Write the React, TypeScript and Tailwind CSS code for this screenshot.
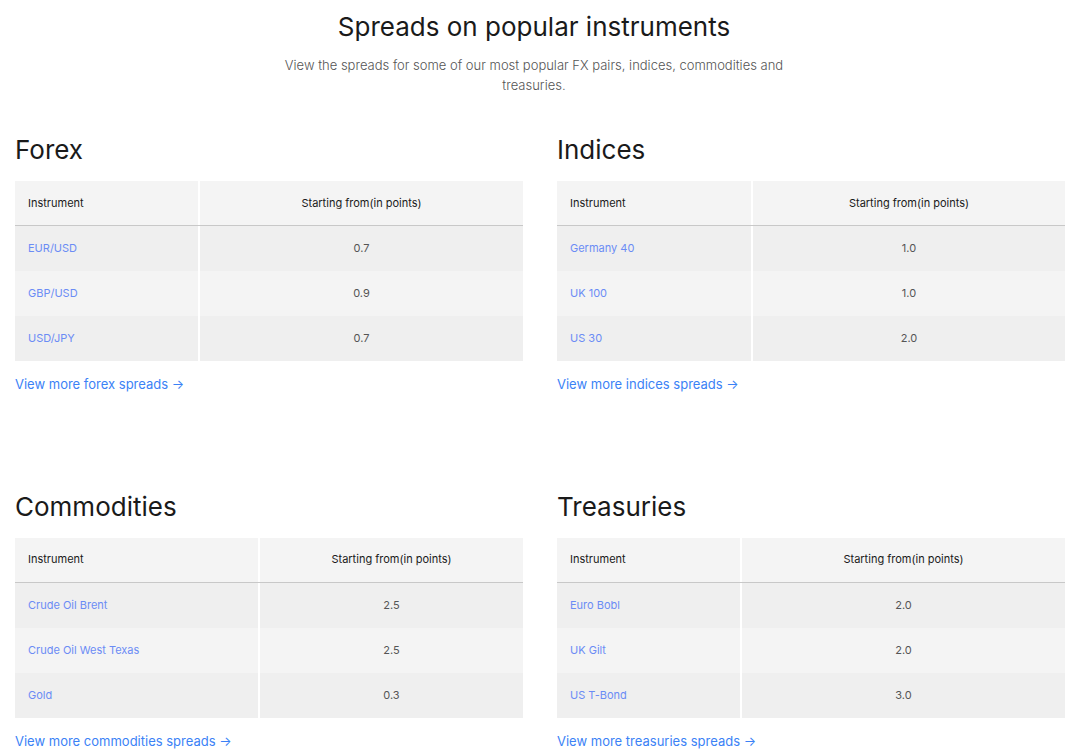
const sections = [
  { title: "Forex", w: "w-[185px]", link: "View more forex spreads", rows: [["EUR/USD", "0.7"], ["GBP/USD", "0.9"], ["USD/JPY", "0.7"]] },
  { title: "Indices", w: "w-[196px]", link: "View more indices spreads", rows: [["Germany 40", "1.0"], ["UK 100", "1.0"], ["US 30", "2.0"]] },
  { title: "Commodities", w: "w-[245px]", link: "View more commodities spreads", rows: [["Crude Oil Brent", "2.5"], ["Crude Oil West Texas", "2.5"], ["Gold", "0.3"]] },
  { title: "Treasuries", w: "w-[185px]", link: "View more treasuries spreads", rows: [["Euro Bobl", "2.0"], ["UK Gilt", "2.0"], ["US T-Bond", "3.0"]] },
];

function Section({ s }: { s: (typeof sections)[number] }) {
  return (
    <div>
      <h2 className="text-[26px] leading-[32px] text-[#1a1a1a]">{s.title}</h2>
      <div className="mt-[15px] text-[11px]">
        <div className="flex h-[45px] bg-[#f4f4f4] border-b border-[#c8c8c8] text-[#1a1a1a]">
          <div className={`${s.w} flex items-center pl-[13px] border-r-2 border-white`}>Instrument</div>
          <div className="flex-1 flex items-center justify-center">Starting from(in points)</div>
        </div>
        {s.rows.map((r, i) => (
          <div key={r[0]} className={`flex h-[45px] ${i % 2 === 0 ? "bg-[#efefef]" : "bg-[#f4f4f4]"}`}>
            <div className={`${s.w} flex items-center pl-[13px] border-r-2 border-white text-[#6b8cf5]`}>{r[0]}</div>
            <div className="flex-1 flex items-center justify-center text-[#555]">{r[1]}</div>
          </div>
        ))}
      </div>
      <div className="mt-[14px] text-[13px] text-[#3b82f6]">{s.link} →</div>
    </div>
  );
}

export default function App() {
  return (
    <div className="bg-white w-[1068px] min-h-[753px] px-[15px] pt-[10px]" style={{ fontFamily: "Inter, 'Liberation Sans', sans-serif" }}>
      <h1 className="text-center text-[26px] leading-[34px] text-[#1a1a1a]">Spreads on popular instruments</h1>
      <p className="mx-auto mt-[11px] w-[520px] text-center text-[13px] leading-[20px] font-light text-[#555]">
        View the spreads for some of our most popular FX pairs, indices, commodities and treasuries.
      </p>
      <div className="grid grid-cols-[508px_508px] gap-x-[34px] gap-y-[96px] mt-[39px]">
        {sections.map((s) => (
          <Section key={s.title} s={s} />
        ))}
      </div>
    </div>
  );
}
